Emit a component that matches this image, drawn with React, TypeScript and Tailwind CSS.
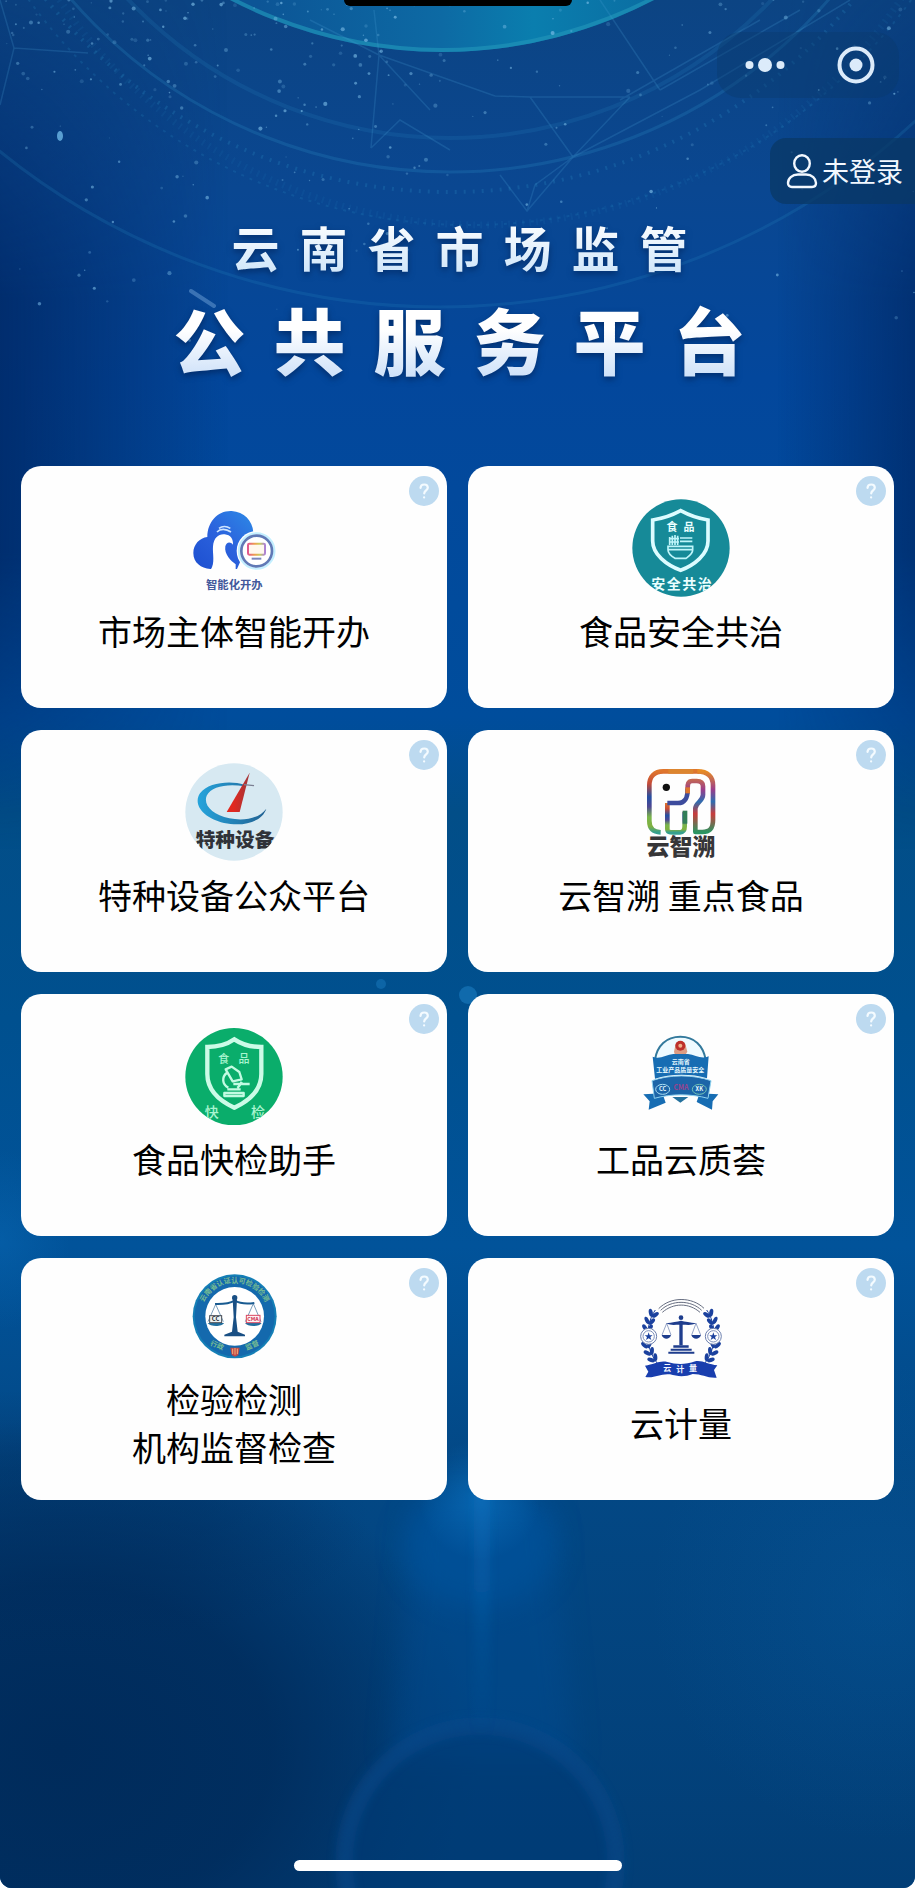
import React from "react";

const FONT = "font-['Noto_Sans_CJK_SC','Noto_Sans',sans-serif]";

function seeded(seed: number) {
  let s = seed;
  return () => {
    s = (s * 16807) % 2147483647;
    return s / 2147483647;
  };
}

const rand = seeded(42);
const stars = Array.from({ length: 260 }, (_, i) => {
  const left = i % 3 !== 0;
  const depth = rand() * rand();
  return {
    x: left ? rand() * 420 : 380 + rand() * 535,
    y: depth * 400,
    r: 0.6 + rand() * 1.5,
    o: 0.15 + rand() * 0.5,
  };
});

function Backdrop() {
  return (
    <svg
      className="absolute inset-0 h-full w-full"
      viewBox="0 0 915 1888"
      preserveAspectRatio="xMidYMin slice"
      aria-hidden="true"
    >
      <defs>
        <linearGradient id="base" x1="0" y1="0" x2="0" y2="1">
          <stop offset="0" stopColor="#0c4483" />
          <stop offset="0.1" stopColor="#0a4791" />
          <stop offset="0.2" stopColor="#03479c" />
          <stop offset="0.38" stopColor="#004d9c" />
          <stop offset="0.43" stopColor="#024e88" />
          <stop offset="0.54" stopColor="#00508f" />
          <stop offset="0.66" stopColor="#01539a" />
          <stop offset="0.78" stopColor="#034885" />
          <stop offset="1" stopColor="#023e76" />
        </linearGradient>
        <linearGradient id="sides" x1="0" y1="0" x2="1" y2="0">
          <stop offset="0" stopColor="#002560" stopOpacity="0.75" />
          <stop offset="0.25" stopColor="#002560" stopOpacity="0" />
          <stop offset="0.85" stopColor="#002560" stopOpacity="0" />
          <stop offset="1" stopColor="#002560" stopOpacity="0.65" />
        </linearGradient>
        <linearGradient id="sideFade" x1="0" y1="0" x2="0" y2="1">
          <stop offset="0" stopColor="#fff" stopOpacity="0.2" />
          <stop offset="0.35" stopColor="#fff" />
          <stop offset="0.65" stopColor="#fff" />
          <stop offset="1" stopColor="#fff" stopOpacity="0" />
        </linearGradient>
        <mask id="sideMask">
          <rect width="915" height="850" fill="url(#sideFade)" />
        </mask>
        <radialGradient id="dark">
          <stop offset="0" stopColor="#002b5b" />
          <stop offset="0.5" stopColor="#002b5b" stopOpacity="0.85" />
          <stop offset="1" stopColor="#002b5b" stopOpacity="0" />
        </radialGradient>
        <radialGradient id="glow">
          <stop offset="0" stopColor="#0a6cb8" stopOpacity="0.75" />
          <stop offset="1" stopColor="#0a6cb8" stopOpacity="0" />
        </radialGradient>
        <linearGradient id="beam" x1="0" y1="0" x2="0" y2="1">
          <stop offset="0" stopColor="#1170bd" stopOpacity="0.8" />
          <stop offset="1" stopColor="#0a5ba5" stopOpacity="0" />
        </linearGradient>
        <linearGradient id="globe" x1="0" y1="0" x2="1" y2="0">
          <stop offset="0.3" stopColor="#0c5596" />
          <stop offset="0.5" stopColor="#0d6aa4" />
          <stop offset="0.6" stopColor="#0a7eae" />
          <stop offset="0.8" stopColor="#0b659c" />
        </linearGradient>
        <filter id="soft" x="-60%" y="-60%" width="220%" height="220%">
          <feGaussianBlur stdDeviation="14" />
        </filter>
        <filter id="haze" x="-60%" y="-20%" width="220%" height="140%">
          <feGaussianBlur stdDeviation="4" />
        </filter>
      </defs>
      <rect width="915" height="1888" fill="url(#base)" />
      <rect width="915" height="850" fill="url(#sides)" mask="url(#sideMask)" />

      <g fill="none" stroke="#2a8cc4">
        <circle cx="442" cy="-406" r="458" fill="url(#globe)" stroke="none" />
        <circle cx="442" cy="-406" r="456" stroke="#2093b8" strokeWidth="4" strokeOpacity="0.7" />
        <circle cx="450" cy="-330" r="502" strokeWidth="3" strokeOpacity="0.25" />
        <circle cx="450" cy="-305" r="443" strokeWidth="4" strokeOpacity="0.16" />
        <circle cx="450" cy="-328" r="520" strokeWidth="4" strokeDasharray="2 7" strokeOpacity="0.25" />
        <circle cx="480" cy="-280" r="505" strokeWidth="7" strokeDasharray="2 5" strokeOpacity="0.1" />
        <circle cx="440" cy="-393" r="700" strokeWidth="3" strokeOpacity="0.2" />
        <circle cx="470" cy="-320" r="545" strokeWidth="2" strokeDasharray="3 6" strokeOpacity="0.2" />
      </g>
      <g fill="none" stroke="#4a9fd4" strokeOpacity="0.22" strokeWidth="1.5">
        <path d="M374 10L379 55L371 148M379 55L430 110M371 148L400 120L450 150M0 105L14 48L88 53M14 48L0 0M495 96L530 97L630 97M630 97L573 157L527 211L500 175M530 97L573 157M527 211L535 185L573 157M379 55L495 96M600 0L660 90M379 55L310 20M660 90L800 10M620 100L760 20M573 157L700 90L850 0" />
      </g>
      {stars.map((s, i) => (
        <circle key={i} cx={s.x} cy={s.y} r={s.r} fill="#7fc0ea" opacity={s.o} />
      ))}
      <ellipse cx="60" cy="136" rx="3" ry="5" fill="#7cc9f5" opacity="0.7" />
      <path d="M191 291L214 306" stroke="#6fa2d8" strokeWidth="4" strokeLinecap="round" opacity="0.5" />

      <ellipse cx="0" cy="1240" rx="70" ry="90" fill="url(#glow)" opacity="0.5" />
      <ellipse cx="60" cy="1750" rx="420" ry="330" fill="url(#dark)" />
      <ellipse cx="40" cy="1520" rx="330" ry="130" fill="url(#dark)" opacity="0.35" />
      <ellipse cx="880" cy="1600" rx="230" ry="240" fill="url(#glow)" opacity="0.25" />
      <ellipse cx="480" cy="1545" rx="76" ry="62" fill="#0456a0" opacity="0.6" filter="url(#soft)" />
      <path d="M415 1500H550L575 1760H390Z" fill="#04509a" opacity="0.35" filter="url(#soft)" />
      <circle cx="480" cy="1862" r="138" fill="#033a76" opacity="0.6" filter="url(#haze)" />
      <circle cx="480" cy="1862" r="136" fill="none" stroke="#084e90" strokeWidth="18" opacity="0.45" filter="url(#haze)" />
      <ellipse cx="480" cy="1500" rx="60" ry="60" fill="url(#glow)" />
      <rect x="474" y="1490" width="16" height="250" fill="url(#beam)" filter="url(#haze)" opacity="0.6" />
      <circle cx="468" cy="995" r="9" fill="#1673b5" opacity="0.75" />
      <circle cx="381" cy="984" r="5" fill="#1673b5" opacity="0.6" />
    </svg>
  );
}

function Emblem({ box, children }: { box: string; children: React.ReactNode }) {
  return (
    <svg
      className="h-[98px] w-[98px]"
      viewBox={box}
      fontFamily="Noto Sans CJK SC, sans-serif"
      fontWeight="700"
      textAnchor="middle"
      aria-hidden="true"
    >
      {children}
    </svg>
  );
}

function CloudIcon() {
  return (
    <Emblem box="44 24 294 294">
      <defs>
        <linearGradient id="cloud" x1="0" y1="1" x2="1" y2="0">
          <stop offset="0" stopColor="#1d4fd0" />
          <stop offset="0.5" stopColor="#2b62dd" />
          <stop offset="1" stopColor="#2d8ae6" />
        </linearGradient>
        <linearGradient id="screen" x1="0" y1="0" x2="1" y2="0">
          <stop offset="0" stopColor="#e2578f" />
          <stop offset="0.4" stopColor="#efa04c" />
          <stop offset="0.7" stopColor="#c5cf60" />
          <stop offset="1" stopColor="#ad7fd6" />
        </linearGradient>
      </defs>
      <path
        d="M120 234C92 232 69 215 69 186C69 160 88 141 111 138C111 92 143 58 184 60C221 62 247 89 249 124L200 234Z"
        fill="url(#cloud)"
      />
      <path
        d="M121 236C135 216 126 188 128 166C130 139 146 128 163 130C181 132 189 144 188 161C180 151 168 153 165 166C161 190 182 210 196 220V236Z"
        fill="#fff"
      />
      <path d="M140 123C150 112 167 113 182 123M146 112C155 105 169 105 180 112" stroke="#cfe5ff" strokeWidth="5" fill="none" />
      <circle cx="259" cy="180" r="60" fill="#fff" />
      <circle cx="259" cy="180" r="53" fill="none" stroke="#c4efff" strokeWidth="7" />
      <circle cx="259" cy="180" r="46" fill="#fff" stroke="#6079b6" strokeWidth="8" />
      <rect x="233" y="158" width="51" height="33" rx="4" fill="#fff8ee" stroke="url(#screen)" strokeWidth="6" />
      <path d="M244 203H273" stroke="#7a86bd" strokeWidth="6" />
      <text x="192" y="293" fontSize="34" fill="#42589b">智能化开办</text>
    </Emblem>
  );
}

function FoodSafetyIcon() {
  return (
    <Emblem box="36 24 294 294">
      <clipPath id="fsClip">
        <circle cx="183" cy="171" r="146" />
      </clipPath>
      <circle cx="183" cy="171" r="146" fill="#168a98" />
      <g clipPath="url(#fsClip)" fill="#eaffff">
        <path
          d="M182 59C208 73 236 83 264 87V150C264 190 224 222 182 238C139 222 98 190 98 150V87C128 83 156 73 182 59Z"
          fill="none"
          stroke="#dcfcff"
          strokeWidth="11"
        />
        <text x="156" y="120" fontSize="33">食</text>
        <text x="207" y="120" fontSize="33">品</text>
        <text x="115" y="293" fontSize="42">安</text>
        <text x="161" y="293" fontSize="42">全</text>
        <text x="208" y="293" fontSize="42">共</text>
        <text x="254" y="293" fontSize="42">治</text>
        <g fill="none" stroke="#bff5fa" strokeWidth="5">
          <path d="M144 166H218V177C218 189 206 196 198 202H165C155 196 144 189 144 177ZM144 176H218M149 138V162M157 134V162M165 132V162M173 134V162M180 141H217M180 151H217M147 143H177M147 153H177" />
        </g>
      </g>
    </Emblem>
  );
}

function EquipmentIcon() {
  return (
    <Emblem box="44 21 294 294">
      <defs>
        <linearGradient id="needle" x1="0" y1="0" x2="1" y2="0">
          <stop offset="0.3" stopColor="#e1281f" />
          <stop offset="0.9" stopColor="#a83436" />
        </linearGradient>
        <linearGradient id="swoosh" x1="0" y1="0" x2="1" y2="0">
          <stop offset="0" stopColor="#25a4dc" />
          <stop offset="1" stopColor="#226293" />
        </linearGradient>
      </defs>
      <clipPath id="eqClip">
        <circle cx="191" cy="168" r="146" />
      </clipPath>
      <circle cx="191" cy="168" r="146" fill="#d7e9f2" />
      <g clipPath="url(#eqClip)">
        <path
          d="M222 86C178 73 113 80 89 112C66 147 101 187 161 201C224 214 276 195 288 158C266 188 220 196 177 187C127 176 98 148 109 119C123 91 172 82 222 91Z"
          fill="url(#swoosh)"
        />
        <path d="M238 50L208 168H169Z" fill="url(#needle)" />
        <path d="M221 86L251 89" stroke="#7a7f92" strokeWidth="4" />
        <text x="194" y="272" fontSize="59" fontWeight="900" fill="#303238">特种设备</text>
      </g>
    </Emblem>
  );
}

function ElephantIcon() {
  return (
    <Emblem box="36 21 294 294">
      <defs>
        <linearGradient id="rainA" x1="0" y1="0" x2="0" y2="1">
          <stop offset="0" stopColor="#df762d" />
          <stop offset="0.2" stopColor="#c54b38" />
          <stop offset="0.42" stopColor="#244fa3" />
          <stop offset="0.58" stopColor="#4f4893" />
          <stop offset="0.75" stopColor="#7ab64b" />
          <stop offset="0.9" stopColor="#80b040" />
          <stop offset="1" stopColor="#36a08e" />
        </linearGradient>
        <linearGradient id="rainB" x1="0" y1="0" x2="0" y2="1">
          <stop offset="0" stopColor="#e78b25" />
          <stop offset="0.3" stopColor="#9a3d8a" />
          <stop offset="0.5" stopColor="#2e6db0" />
          <stop offset="0.7" stopColor="#ca3b3b" />
          <stop offset="1" stopColor="#2c9562" />
        </linearGradient>
      </defs>
      <g fill="none" strokeWidth="14" strokeLinejoin="round">
        <path d="M122 229C99 228 88 216 88 195V88C88 62 103 46 130 46H238" stroke="url(#rainA)" />
        <path
          d="M232 46C264 46 279 62 279 88V192C279 216 271 228 247 228H226V158C226 140 249 136 249 116V91C249 80 243 75 230 75H217C204 75 203 84 203 97V112"
          stroke="url(#rainB)"
        />
        <path d="M142 141V218C142 229 149 229 160 229H180C191 229 194 221 194 211V167" stroke="url(#rainA)" />
        <path d="M203 98C203 126 196 141 174 141H142" stroke="#3c4b9d" />
        <path d="M203 112V94" stroke="#df762d" />
        <path d="M195 203V164" stroke="#327e58" />
        <path d="M145 46H220" stroke="#dc852f" />
      </g>
      <circle cx="139" cy="94" r="11" fill="#111" />
      <text x="183" y="297" fontSize="69" fontWeight="900" fill="#363638">云智溯</text>
    </Emblem>
  );
}

function QuickTestIcon() {
  return (
    <Emblem box="44 24 294 294">
      <clipPath id="qtClip">
        <circle cx="191" cy="173" r="146" />
      </clipPath>
      <circle cx="191" cy="173" r="146" fill="#0aad6b" />
      <g clipPath="url(#qtClip)" fill="#a9f5d0">
        <path
          d="M192 61C217 78 243 84 273 84V165C273 213 242 243 192 266C142 243 111 213 111 165V84C142 84 168 78 192 61Z"
          fill="none"
          stroke="#ccfbe7"
          strokeWidth="13"
        />
        <g fontWeight="500">
          <text x="160" y="133" fontSize="33">食</text>
          <text x="221" y="133" fontSize="33">品</text>
          <text x="124" y="293" fontSize="42">快</text>
          <text x="263" y="293" fontSize="42">检</text>
        </g>
        <g fill="none" stroke="#c2fbe2" strokeWidth="7" strokeLinejoin="round">
          <path d="M184 143L166 151L187 187L214 181L207 159ZM169 162C154 174 155 197 174 206M189 195H238M214 188C209 199 207 202 201 207M171 211H211M162 231V222H220V231Z" />
        </g>
      </g>
    </Emblem>
  );
}

function QualityIcon() {
  return (
    <Emblem box="36 24 294 294">
      <path d="M105 122C111 80 139 53 181 53C223 53 250 80 257 122" fill="#eefaff" stroke="#33799c" strokeWidth="6" />
      <path d="M98 113C118 123 139 107 160 105H204C226 108 244 122 266 112L261 178C215 164 151 164 105 179Z" fill="#176db3" />
      <path d="M162 98L167 75C174 64 189 64 196 75L202 98L198 105H164Z" fill="#dc9c83" />
      <circle cx="181" cy="80" r="15" fill="#bd302b" />
      <circle cx="181" cy="80" r="6" fill="#efb18a" />
      <path d="M100 224L70 226L89 247L86 272L137 251L129 228ZM265 224L295 226L278 247L276 272L230 249L237 228Z" fill="#176db3" />
      <path d="M157 234H205L181 251Z" fill="#24719d" />
      <path d="M96 185C149 166 219 166 273 185L264 238C213 224 154 224 103 238Z" fill="#1c65a8" stroke="#8fd2ef" strokeWidth="3" />
      <g fill="#e7faff">
        <text x="182" y="134" fontSize="18">云南省</text>
        <text x="181" y="160" fontSize="18">工业产品质量安全</text>
        <text x="128" y="217" fontSize="17">CC</text>
        <text x="238" y="217" fontSize="17">XK</text>
      </g>
      <ellipse cx="128" cy="211" rx="21" ry="15" fill="none" stroke="#a8def4" strokeWidth="3" />
      <ellipse cx="238" cy="211" rx="21" ry="15" fill="none" stroke="#73c4b6" strokeWidth="3" />
      <text x="183" y="214" fontSize="21" fill="#99438f">CMA</text>
    </Emblem>
  );
}

function InspectionIcon() {
  return (
    <Emblem box="44 18 294 294">
      <defs>
        <path id="topArc" d="M92 166A101 101 0 0 1 294 166" />
      </defs>
      <circle cx="193" cy="166" r="126" fill="#157fb6" />
      <circle cx="193" cy="166" r="120" fill="#1469ad" />
      <circle cx="193" cy="166" r="88" fill="#fff" />
      <g fill="#77bd92" fontSize="21">
        <text>
          <textPath href="#topArc" startOffset="50%">云南省认证认可检验检测</textPath>
        </text>
        <text x="140" y="260" transform="rotate(22 140 254)">行政</text>
        <text x="246" y="260" transform="rotate(-22 246 254)">监督</text>
      </g>
      <path d="M180 260H208L204 282L194 287L184 282Z" fill="#bf4a4a" />
      <path d="M187 263V279M194 261V281M201 263V279" stroke="#f4b178" strokeWidth="3" />
      <g fill="none" stroke="#386c98" strokeWidth="4">
        <path d="M134 129C160 130 177 128 193 119C209 128 226 130 252 126" strokeWidth="6" stroke="#195b91" />
        <path d="M136 130L113 182M136 130L159 182M249 128L225 182M249 128L272 182" strokeWidth="2" />
      </g>
      <path d="M187 115H200L197 169L202 212L224 221V226H162V221L185 212L190 169Z" fill="#194f84" />
      <circle cx="193" cy="110" r="8" fill="#194f84" />
      <path d="M112 186H161C156 198 119 198 112 186ZM224 186H274C267 198 231 198 224 186Z" fill="#216f9f" />
      <rect x="118" y="164" width="36" height="21" fill="#edf2f2" stroke="#474c55" strokeWidth="3" />
      <text x="136" y="181" fontSize="18" fill="#252b34">CC</text>
      <rect x="228" y="163" width="41" height="22" fill="#fff2f3" stroke="#d94761" strokeWidth="3" />
      <text x="248" y="180" fontSize="16" fill="#cd2d4b">CMA</text>
    </Emblem>
  );
}

const leaves = [
  [98, 82, 20], [87, 104, 5], [81, 125, -4], [79, 176, -18], [87, 198, -32], [98, 218, -42],
];

function Laurel() {
  return (
    <g fill="#1b419e">
      {leaves.map(([x, y, a]) => (
        <g key={y} transform={`rotate(${a} ${x} ${y})`}>
          <ellipse cx={x - 6} cy={y} rx="6" ry="12" transform={`rotate(-30 ${x - 6} ${y})`} />
          <ellipse cx={x + 9} cy={y + 2} rx="6" ry="12" transform={`rotate(38 ${x + 9} ${y + 2})`} />
        </g>
      ))}
      <path d="M106 72C80 108 70 180 112 232" fill="none" stroke="#1b419e" strokeWidth="3" />
      <circle cx="86" cy="151" r="24" fill="#fff" stroke="#6c7fae" strokeWidth="3" />
      <circle cx="86" cy="151" r="17" fill="#fff" stroke="#7d8fbb" strokeWidth="3" />
      <path d="M86 139L89 148H98L91 153L94 162L86 157L78 162L81 153L74 148H83Z" />
    </g>
  );
}

function MetrologyIcon() {
  return (
    <Emblem box="36 15 294 294">
      <g fill="none" stroke="#666d80" strokeWidth="3">
        <path d="M116 68C151 32 215 31 252 67M122 73C154 41 212 41 245 73M127 79C160 50 207 50 240 79" />
      </g>
      <Laurel />
      <g transform="translate(366 0) scale(-1 1)">
        <Laurel />
      </g>
      <g fill="#1e3d8d">
        <circle cx="183" cy="95" r="7" />
        <path d="M138 112C158 108 171 108 183 104C195 108 210 108 229 112C213 119 200 116 188 116V178H178V116C166 116 153 119 138 112Z" />
        <path d="M160 178H206V185H160ZM152 188H215V194H152ZM145 197H223V203H145Z" />
        <path d="M125 147H153C149 162 130 162 125 147ZM214 147H243C238 162 219 162 214 147Z" />
      </g>
      <path d="M140 112L126 147M140 112L153 147M228 112L215 147M228 112L242 147" stroke="#6177aa" strokeWidth="2" />
      <path d="M75 239C102 235 120 222 142 228C170 236 196 236 226 226C246 222 266 236 292 238L282 252L290 275C262 277 246 264 218 264C196 273 173 272 150 265C121 262 106 277 76 273L85 257Z" fill="#193eae" />
      <g fill="#f4f8ff" fontSize="24">
        <text x="142" y="254">云</text>
        <text x="181" y="257">计</text>
        <text x="219" y="254">量</text>
      </g>
    </Emblem>
  );
}

const services = [
  { lines: ["市场主体智能开办"], Icon: CloudIcon },
  { lines: ["食品安全共治"], Icon: FoodSafetyIcon },
  { lines: ["特种设备公众平台"], Icon: EquipmentIcon },
  { lines: ["云智溯 重点食品"], Icon: ElephantIcon },
  { lines: ["食品快检助手"], Icon: QuickTestIcon },
  { lines: ["工品云质荟"], Icon: QualityIcon },
  { lines: ["检验检测", "机构监督检查"], Icon: InspectionIcon },
  { lines: ["云计量"], Icon: MetrologyIcon },
];

function ServiceCard({ lines, Icon }: { lines: string[]; Icon: () => React.ReactElement }) {
  return (
    <li className="relative flex min-h-[242px] rounded-[20px] bg-[#fefefe]">
      <a href="#" className="flex flex-1 flex-col items-center justify-center gap-2.5 pb-5 text-black">
        <Icon />
        <span className="text-center text-[34px] leading-[48px]">
          {lines.map((line) => (
            <span key={line} className="block">
              {line}
            </span>
          ))}
        </span>
      </a>
      <button
        type="button"
        aria-label="帮助"
        className="absolute top-2.5 right-2 flex h-[30px] w-[30px] items-center justify-center rounded-full bg-[#bddaf0]"
      >
        <svg className="h-5 w-5" viewBox="0 0 20 20" fill="none" stroke="#f4fbff" strokeWidth="2.2" strokeLinecap="round">
          <path d="M6.5 6.8C6.7 4.6 8.1 3.5 10.2 3.5C12.3 3.5 13.8 4.8 13.8 6.7C13.8 9.3 10.4 9.5 10.2 12.4M10.1 16.3V16.5" />
        </svg>
      </button>
    </li>
  );
}

export default function App() {
  return (
    <div className={`relative flex min-h-screen flex-col overflow-hidden rounded-b-xl bg-[#01478c] ${FONT}`}>
      <Backdrop />
      <div className="absolute top-0 left-1/2 h-1.5 w-[228px] -translate-x-1/2 rounded-b-lg bg-black" />

      <header className="relative pt-8">
        <div className="flex justify-end pr-4">
          <div className="flex h-[66px] w-[182px] items-center rounded-3xl bg-[#0b3a6c]/40">
            <button type="button" aria-label="更多" className="flex flex-1 justify-center pl-1">
              <svg className="h-4 w-10" viewBox="0 0 40 16" fill="#dcebfa">
                <circle cx="4.5" cy="8" r="4" />
                <circle cx="20" cy="8" r="7" />
                <circle cx="35.5" cy="8" r="4" />
              </svg>
            </button>
            <button type="button" aria-label="关闭" className="flex flex-1 justify-center pl-1">
              <svg className="h-10 w-10" viewBox="0 0 40 40" fill="none">
                <circle cx="20" cy="20" r="16.5" stroke="#dcebfa" strokeWidth="4" />
                <circle cx="20" cy="20" r="6.5" fill="#dcebfa" />
              </svg>
            </button>
          </div>
        </div>

        <div className="mt-10 flex justify-end">
          <button
            type="button"
            className="flex h-[66px] items-center gap-1 rounded-l-2xl bg-[#0a3866]/75 pr-3 pl-4 text-[27px] leading-8 text-[#f2f8ff]"
          >
            <svg className="h-9 w-8" viewBox="0 0 32 36" fill="none" stroke="#f2f8ff" strokeWidth="2.4" aria-hidden="true">
              <ellipse cx="16" cy="10.5" rx="7.8" ry="8.3" />
              <path d="M12 21.5H20C26 21.5 30 25.5 30 30C30 32.5 28.5 34 26 34H6C3.5 34 2 32.5 2 30C2 25.5 6 21.5 12 21.5Z" />
            </svg>
            未登录
          </button>
        </div>

        <h1 className="mt-3.5 flex flex-col items-center gap-5 pl-1 text-white drop-shadow-[0_3px_3px_rgba(0,30,80,0.6)]">
          <span className="flex gap-5 bg-gradient-to-b from-white to-[#cfe6fa] bg-clip-text text-[48px] leading-[56px] font-bold text-transparent">
            {[..."云南省市场监管"].map((c) => (
              <span key={c}>{c}</span>
            ))}
          </span>
          <span className="flex gap-7 bg-gradient-to-b from-white from-40% to-[#c9def8] bg-clip-text text-[72px] leading-[88px] font-black text-transparent">
            {[..."公共服务平台"].map((c) => (
              <span key={c}>{c}</span>
            ))}
          </span>
        </h1>
      </header>

      <main className="relative mt-[84px] px-[21px]">
        <ul className="grid grid-cols-2 gap-x-[21px] gap-y-[22px]">
          {services.map((s) => (
            <ServiceCard key={s.lines[0]} {...s} />
          ))}
        </ul>
      </main>

      <div className="relative mt-auto flex justify-center pt-8 pb-[17px]">
        <div className="h-[11px] w-[328px] rounded-full bg-white" />
      </div>
    </div>
  );
}
